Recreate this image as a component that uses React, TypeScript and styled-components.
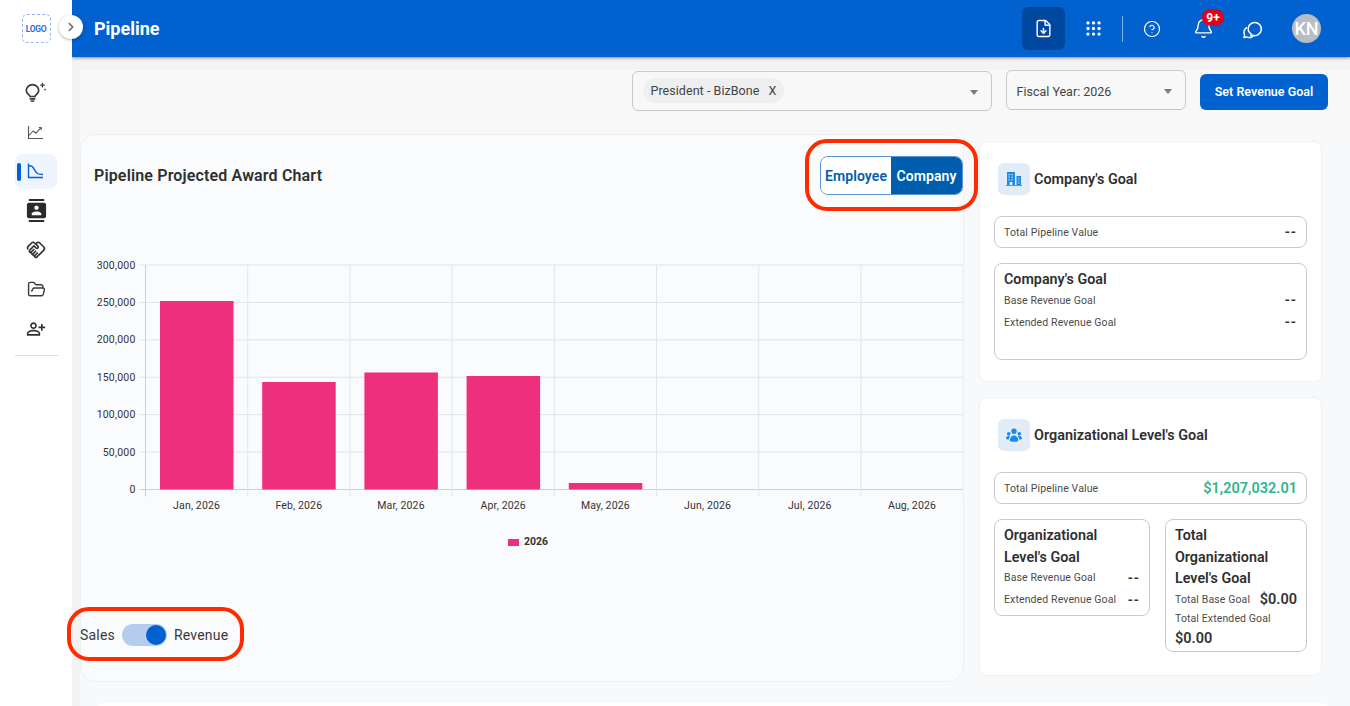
import React from "react";
import styled, { createGlobalStyle } from "styled-components";
import { FileDown, Grip, CircleHelp, Bell, FolderOpen, ChevronRight } from "lucide-react";
import { MdContacts, MdOutlineHandshake, MdOutlinePersonAddAlt } from "react-icons/md";

const Global = createGlobalStyle`
  html, body { margin: 0; padding: 0; height: 100%; overflow: hidden; }
  body { font-family: Roboto, "Liberation Sans", sans-serif; color: #2f2f2f; background: #f7f7f8; }
  * { box-sizing: border-box; }
`;

const Page = styled.div`
  display: flex;
  width: 1350px;
  height: 706px;
  overflow: hidden;
  position: relative;
`;

const Sidebar = styled.aside`
  width: 72px;
  flex: none;
  background: #fff;
  display: flex;
  flex-direction: column;
  align-items: center;
  position: relative;
  z-index: 3;
  padding-top: 14px;
`;

const Logo = styled.div`
  width: 29px;
  height: 29px;
  border: 1px dashed #8fb4ee;
  border-radius: 5px;
  display: flex;
  align-items: center;
  justify-content: center;
  font-size: 8.5px;
  font-weight: 700;
  letter-spacing: -0.3px;
  color: #2f6fd6;
  margin-bottom: 32px;
`;

const CollapseButton = styled.button`
  position: absolute;
  left: 59px;
  top: 15px;
  width: 24px;
  height: 24px;
  padding: 0;
  border: none;
  border-radius: 50%;
  background: #fff;
  color: #666;
  display: flex;
  align-items: center;
  justify-content: center;
  box-shadow: 0 1px 3px rgba(0, 0, 0, 0.3);
`;

const NavList = styled.nav`
  display: flex;
  flex-direction: column;
  align-items: center;
  width: 100%;
`;

const NavItem = styled.div<{ $active?: boolean }>`
  width: 42px;
  height: 35px;
  margin-bottom: 4.4px;
  border-radius: 8px;
  display: flex;
  align-items: center;
  justify-content: center;
  color: #3a3a3a;
  position: relative;
  background: ${(p) => (p.$active ? "#eef5fe" : "transparent")};
  ${(p) =>
    p.$active &&
    `&::before {
      content: "";
      position: absolute;
      left: 2px;
      top: 9px;
      width: 4px;
      height: 18px;
      border-radius: 2px;
      background: #0061cf;
    }`}
`;

const NavDivider = styled.div`
  width: 43px;
  height: 1px;
  background: #dcdcdc;
  margin-top: 4px;
`;

const Main = styled.div`
  flex: 1;
  min-width: 0;
  display: flex;
  flex-direction: column;
`;

const Header = styled.header`
  height: 57px;
  flex: none;
  background: #0061cf;
  box-shadow: 0 1px 3px rgba(0, 0, 0, 0.45);
  display: flex;
  align-items: center;
  padding-left: 22px;
  padding-right: 29px;
  color: #fff;
  position: relative;
  z-index: 2;
`;

const Title = styled.h1`
  margin: 0;
  font-size: 18px;
  font-weight: 700;
  flex: 1;
`;

const ActiveIconBox = styled.div`
  width: 43px;
  height: 43px;
  border-radius: 6px;
  background: #00479f;
  display: flex;
  align-items: center;
  justify-content: center;
  margin-right: 16px;
`;

const HeaderIcon = styled.div<{ $mr: number }>`
  width: 24px;
  height: 24px;
  display: flex;
  align-items: center;
  justify-content: center;
  margin-right: ${(p) => p.$mr}px;
  position: relative;
`;

const HeaderDivider = styled.div`
  width: 1px;
  height: 26px;
  background: rgba(255, 255, 255, 0.5);
  margin-right: 17px;
`;

const Badge = styled.span`
  position: absolute;
  left: 11px;
  top: -7.5px;
  min-width: 22px;
  height: 17px;
  border-radius: 9px;
  background: #e0021a;
  color: #fff;
  font-size: 12px;
  font-weight: 700;
  display: flex;
  align-items: center;
  justify-content: center;
`;

const Avatar = styled.div`
  width: 29px;
  height: 29px;
  border-radius: 50%;
  background: #b8bcc3;
  color: #fff;
  font-size: 18px;
  font-weight: 500;
  display: flex;
  align-items: center;
  justify-content: center;
`;

const Content = styled.div`
  flex: 1;
  min-height: 0;
  padding: 13px 0 0 8px;
  background: #f3f3f4;
`;

const Toolbar = styled.div`
  display: flex;
  align-items: flex-start;
  justify-content: flex-end;
  padding-right: 22px;
  height: 64px;
  background: #f8f8f8;
`;

const SelectBox = styled.div<{ $w: number; $mr: number; $top: number }>`
  width: ${(p) => p.$w}px;
  height: 40px;
  margin-top: ${(p) => p.$top}px;
  margin-right: ${(p) => p.$mr}px;
  border: 1px solid #c8c8c8;
  border-radius: 6px;
  display: flex;
  align-items: center;
  padding: 2px 13px 0 9.5px;
  font-size: 12.5px;
  color: #444;
`;

const Chip = styled.span`
  height: 25px;
  margin-top: -3px;
  border-radius: 13px;
  background: #eeeff1;
  display: inline-flex;
  align-items: center;
  padding: 0 8px;
  font-size: 12.5px;
  gap: 9px;
  letter-spacing: 0.05px;
  color: #444;
`;

const Caret = styled.span`
  margin-left: auto;
  width: 0;
  height: 0;
  border-left: 4.5px solid transparent;
  border-right: 4.5px solid transparent;
  border-top: 5px solid #7a7a7a;
`;

const PrimaryButton = styled.button`
  width: 128px;
  height: 36px;
  margin-top: 4px;
  padding: 0 0 2px;
  border: none;
  border-radius: 6px;
  background: #0061cf;
  color: #fff;
  font-family: inherit;
  font-size: 12.5px;
  font-weight: 600;
`;

const Body = styled.div`
  display: flex;
  align-items: flex-start;
  background: #f8f9fb;
  height: 572px;
  position: relative;
`;

const ChartCard = styled.section`
  width: 884px;
  height: 548px;
  flex: none;
  background: #fafbfd;
  border: 1px solid #eff0f2;
  border-radius: 16px;
  position: relative;
`;

const ChartHead = styled.div`
  display: flex;
  align-items: flex-start;
  justify-content: space-between;
  padding: 21px 0 0 13px;
  height: 125px;
`;

const ChartTitle = styled.h2`
  margin: 10px 0 0;
  font-size: 16px;
  font-weight: 600;
  letter-spacing: 0.15px;
`;

const Segmented = styled.div`
  display: flex;
  width: 143px;
  height: 39px;
  border: 1px solid #5b95d2;
  border-radius: 8px;
  overflow: hidden;
`;

const Segment = styled.div<{ $on?: boolean }>`
  flex: ${(p) => (p.$on ? "1" : "0 0 70px")};
  display: flex;
  align-items: center;
  justify-content: center;
  font-size: 14px;
  font-weight: 600;
  letter-spacing: 0.1px;
  background: ${(p) => (p.$on ? "#005eae" : "#fff")};
  color: ${(p) => (p.$on ? "#fff" : "#005eae")};
`;

const ChartSvg = styled.svg`
  display: block;
`;

const SwitchRow = styled.div`
  display: flex;
  align-items: center;
  padding: 64px 0 0 0;
  margin-left: -1px;
  font-size: 14px;
  color: #3a3a3a;
  letter-spacing: 0.2px;
`;

const SwitchTrack = styled.div`
  width: 45px;
  height: 22px;
  border-radius: 11px;
  background: #b4ccee;
  margin: 0 7px;
  position: relative;
`;

const SwitchThumb = styled.div`
  position: absolute;
  right: 1px;
  top: 1px;
  width: 20px;
  height: 20px;
  border-radius: 50%;
  background: #0061cf;
`;

const Side = styled.div`
  width: 343px;
  margin: 7px 0 0 15px;
  display: flex;
  flex-direction: column;
  gap: 15px;
`;

const GoalCard = styled.section<{ $h: number }>`
  height: ${(p) => p.$h}px;
  background: #fff;
  border: 1px solid #f0f1f3;
  border-radius: 8px;
  padding: 21px 14px 0;
`;

const GoalHead = styled.div`
  display: flex;
  align-items: center;
  gap: 4px;
  padding-left: 4px;
  font-size: 14.4px;
  font-weight: 600;
  margin-bottom: 21px;
`;

const IconTile = styled.div`
  width: 32px;
  height: 32px;
  border-radius: 6px;
  background: #e1ecf8;
  display: flex;
  align-items: center;
  justify-content: center;
  color: #1e88e5;
`;

const Framed = styled.div`
  border: 1px solid #c9c9c9;
  border-radius: 8px;
`;

const TotalRow = styled(Framed)`
  height: 32px;
  display: flex;
  align-items: center;
  justify-content: space-between;
  padding: 0 9px;
  margin-bottom: 15px;
`;

const SmallLabel = styled.span`
  font-size: 10.5px;
  color: #4b4b4b;
  letter-spacing: 0.12px;
`;

const Dash = styled.span`
  font-size: 14px;
  font-weight: 600;
  color: #333;
  letter-spacing: 1px;
`;

const Money = styled.span`
  font-size: 14.5px;
  font-weight: 600;
  color: #2db68d;
`;

const GoalBox = styled(Framed)<{ $h?: number; $w?: number }>`
  ${(p) => p.$h && `height: ${p.$h}px;`}
  ${(p) => p.$w && `width: ${p.$w}px;`}
  padding: 5px 9px 4px;
  min-width: 0;
`;

const BoxTitle = styled.div`
  font-size: 14.3px;
  font-weight: 600;
  line-height: 21.5px;
  margin-bottom: -1.5px;
`;

const GoalLine = styled.div`
  display: flex;
  align-items: center;
  justify-content: space-between;
  height: 22px;
`;

const BoxPair = styled.div`
  display: flex;
  align-items: flex-start;
  gap: 15px;
`;

const BigValue = styled.span`
  font-size: 14.5px;
  font-weight: 600;
  color: #333;
`;

const TotalExtended = styled.div`
  line-height: 16px;
  margin: -1px 0 1px;
`;

const BelowCard = styled.div`
  position: absolute;
  left: 16px;
  right: 21px;
  top: 569px;
  height: 20px;
  background: #fff;
  border-radius: 8px 8px 0 0;
`;

const Ring = styled.div<{ $x: number; $y: number; $w: number; $h: number }>`
  position: absolute;
  left: ${(p) => p.$x}px;
  top: ${(p) => p.$y}px;
  width: ${(p) => p.$w}px;
  height: ${(p) => p.$h}px;
  border: 4px solid #ff2a00;
  border-radius: 22px;
  z-index: 5;
  pointer-events: none;
`;

const LightbulbSpark = () => (
  <svg width="24" height="24" viewBox="0 0 24 24" fill="none" stroke="#3a3a3a" strokeWidth="1.7" strokeLinecap="round">
    <path d="M6 15.5c0-1.6-3.7-2.6-3.7-5.7a6.2 6.2 0 0 1 12.4 0c0 3.1-3.7 4.1-3.7 5.7z" />
    <path d="M6.3 17.8h4.4M7.3 20h2.4" />
    <path d="M18.5 2.5v3.4M16.8 4.2h3.4" strokeWidth="1.3" />
    <circle cx="21" cy="8.6" r=".9" fill="#3a3a3a" stroke="none" />
  </svg>
);

const TrendAxes = () => (
  <svg width="18" height="18" viewBox="0 0 18 18" fill="none" stroke="#555" strokeWidth="1.1" strokeLinejoin="round">
    <path d="M1.5 3v12.5h14.5" />
    <path d="M2 12.5l4-4.5 3 2.2 5-5.5M11.8 4.5h2.4v2.4" />
  </svg>
);

const DecayAxes = () => (
  <svg width="18" height="18" viewBox="0 0 18 18" fill="none" stroke="#0061cf" strokeWidth="1.4">
    <path d="M1.5 1.5v14h14.5" />
    <path d="M1.5 4h2.5c2.5 0 3.8 6 6.5 7.5 1.6.9 3.4 1 5.5 1" />
  </svg>
);

const ChatBubbles = () => (
  <svg width="22" height="22" viewBox="0 0 22 22" fill="none" stroke="#fff" strokeWidth="1.5" strokeLinejoin="round">
    <path d="M6.3 12.5a6.6 6.6 0 1 1 4.4 4.8l-1.9.3.3-1.8a6.5 6.5 0 0 1-2.8-3.3z" />
    <path d="M5 9.5a5.2 5.2 0 0 0-2.4 7.2l-.6 2.8 2.9-.6a5.2 5.2 0 0 0 6.6-1.7" />
  </svg>
);

const BuildingIcon = () => (
  <svg width="16" height="16" viewBox="0 0 16 16" fill="#1e88e5">
    <path
      fillRule="evenodd"
      d="M1 1h8v13H1zM2.5 3v1.2h1.2V3zM5.5 3v1.2h1.2V3zM2.5 5.6v1.2h1.2V5.6zM5.5 5.6v1.2h1.2V5.6zM2.5 8.2v1.2h1.2V8.2zM5.5 8.2v1.2h1.2V8.2zM3.6 11v3h2.8v-3z"
    />
    <path fillRule="evenodd" d="M10.5 5H15v9h-4.5zM12.3 6.8V8h1V6.800zM12.300 9.200v1.200h1V9.200zM12.300 11.600v1.200h1v-1.200z" />
    <path d="M0 14.200h16V15H0z" />
  </svg>
);

const PeopleIcon = () => (
  <svg width="16" height="15" viewBox="0 0 16 15" fill="#1e88e5">
    <circle cx="8" cy="3.300" r="2.700" />
    <circle cx="2.700" cy="5.700" r="1.800" />
    <circle cx="13.300" cy="5.700" r="1.800" />
    <path d="M3.800 12.500c0-3 1.900-5 4.200-5s4.200 2 4.200 5c0 .8-1.900 1.300-4.200 1.300s-4.200-.5-4.200-1.300z" />
    <path d="M0 10.800c0-1.700 1-2.900 2.600-3.100.6 0 1.100.1 1.500.4-.7.9-1.200 2-1.300 3.500-1.500-.1-2.800-.3-2.800-.8zM16 10.800c0-1.700-1-2.900-2.600-3.100-.6 0-1.100.1-1.500.4.700.9 1.200 2 1.300 3.500 1.500-.1 2.800-.3 2.800-.8z" />
  </svg>
);

const yTicks = ["300,000", "250,000", "200,000", "150,000", "100,000", "50,000", "0"];
const months = ["Jan", "Feb", "Mar", "Apr", "May", "Jun", "Jul", "Aug"];
const barTops = [301, 382, 372.5, 376, 483];
const pad = { x: 81, y: 260 };

const ProjectedChart = () => {
  const x0 = 145.5 - pad.x;
  const step = 102.2;
  const base = 489.5 - pad.y;
  const top = 265 - pad.y;
  const rowH = (base - top) / 6;
  return (
    <ChartSvg width="882" height="300" viewBox="0 0 882 300">
      {yTicks.map((t, i) => {
        const y = top + i * rowH;
        return (
          <g key={t}>
            <line x1={x0 - 6} x2={x0 + step * 8} y1={y} y2={y} stroke={i === 6 ? "#cfd0d4" : "#e2e3e6"} />
            <text x={x0 - 10} y={y + 3.5} textAnchor="end" fontSize="10.5" fill="#333" letterSpacing="0.2">{t}</text>
          </g>
        );
      })}
      {months.map((m, i) => {
        const x = x0 + i * step;
        return (
          <g key={m}>
            <line x1={x} x2={x} y1={top} y2={base + 7} stroke={i === 0 ? "#cfd0d4" : "#e4e5e8"} />
            <text x={x + step / 2} y={base + 19.5} textAnchor="middle" fontSize="10.5" fill="#333" letterSpacing="0.15">{m}, 2026</text>
          </g>
        );
      })}
      <line x1={x0 + step * 8} x2={x0 + step * 8} y1={top} y2={base + 7} stroke="#e4e5e8" />
      {barTops.map((t, i) => (
        <rect key={i} x={x0 + 14.5 + i * step} y={t - pad.y} width="73.5" height={489.5 - t} fill="#ee2f7d" />
      ))}
      <rect x="427" y="279" width="11" height="7" fill="#ee2f7d" />
      <text x="443" y="285" fontSize="10.5" fontWeight="700" fill="#333">2026</text>
    </ChartSvg>
  );
};

export default function App() {
  return (
    <Page>
      <Global />
      <Sidebar>
        <Logo>LOGO</Logo>
        <CollapseButton aria-label="Expand"><ChevronRight size={14} strokeWidth={2.6} /></CollapseButton>
        <NavList>
          <NavItem><LightbulbSpark /></NavItem>
          <NavItem><TrendAxes /></NavItem>
          <NavItem $active><DecayAxes /></NavItem>
          <NavItem><MdContacts size={23} color="#2b2b2b" /></NavItem>
          <NavItem><MdOutlineHandshake size={20} color="#333" /></NavItem>
          <NavItem><FolderOpen size={19} strokeWidth={1.8} /></NavItem>
          <NavItem><MdOutlinePersonAddAlt size={20} color="#333" /></NavItem>
          <NavDivider />
        </NavList>
      </Sidebar>
      <Main>
        <Header>
          <Title>Pipeline</Title>
          <ActiveIconBox><FileDown size={19} strokeWidth={1.8} /></ActiveIconBox>
          <HeaderIcon $mr={17}><Grip size={19} strokeWidth={2.2} /></HeaderIcon>
          <HeaderDivider />
          <HeaderIcon $mr={27}><CircleHelp size={18} strokeWidth={1.6} /></HeaderIcon>
          <HeaderIcon $mr={26}><Bell size={21} strokeWidth={1.6} /><Badge>9+</Badge></HeaderIcon>
          <HeaderIcon $mr={27}><ChatBubbles /></HeaderIcon>
          <Avatar>KN</Avatar>
        </Header>
        <Content>
          <Toolbar>
            <SelectBox $w={360} $mr={14} $top={1}>
              <Chip>President - BizBone <span>X</span></Chip>
              <Caret />
            </SelectBox>
            <SelectBox $w={180} $mr={14} $top={0}>Fiscal Year: 2026<Caret /></SelectBox>
            <PrimaryButton>Set Revenue Goal</PrimaryButton>
          </Toolbar>
          <Body>
            <ChartCard>
              <ChartHead>
                <ChartTitle>Pipeline Projected Award Chart</ChartTitle>
                <Segmented>
                  <Segment>Employee</Segment>
                  <Segment $on>Company</Segment>
                </Segmented>
              </ChartHead>
              <ProjectedChart />
              <SwitchRow>
                Sales
                <SwitchTrack><SwitchThumb /></SwitchTrack>
                Revenue
              </SwitchRow>
            </ChartCard>
            <Side>
              <GoalCard $h={241}>
                <GoalHead>
                  <IconTile><BuildingIcon /></IconTile>
                  Company's Goal
                </GoalHead>
                <TotalRow>
                  <SmallLabel>Total Pipeline Value</SmallLabel>
                  <Dash>--</Dash>
                </TotalRow>
                <GoalBox $h={97}>
                  <BoxTitle>Company's Goal</BoxTitle>
                  <GoalLine><SmallLabel>Base Revenue Goal</SmallLabel><Dash>--</Dash></GoalLine>
                  <GoalLine><SmallLabel>Extended Revenue Goal</SmallLabel><Dash>--</Dash></GoalLine>
                </GoalBox>
              </GoalCard>
              <GoalCard $h={279}>
                <GoalHead>
                  <IconTile><PeopleIcon /></IconTile>
                  Organizational Level's Goal
                </GoalHead>
                <TotalRow>
                  <SmallLabel>Total Pipeline Value</SmallLabel>
                  <Money>$1,207,032.01</Money>
                </TotalRow>
                <BoxPair>
                  <GoalBox $w={156}>
                    <BoxTitle>Organizational Level's Goal</BoxTitle>
                    <GoalLine><SmallLabel>Base Revenue Goal</SmallLabel><Dash>--</Dash></GoalLine>
                    <GoalLine><SmallLabel>Extended Revenue Goal</SmallLabel><Dash>--</Dash></GoalLine>
                  </GoalBox>
                  <GoalBox $w={142}>
                    <BoxTitle>Total Organizational Level's Goal</BoxTitle>
                    <GoalLine><SmallLabel>Total Base Goal</SmallLabel><BigValue>$0.00</BigValue></GoalLine>
                    <TotalExtended><SmallLabel>Total Extended Goal</SmallLabel></TotalExtended>
                    <BigValue>$0.00</BigValue>
                  </GoalBox>
                </BoxPair>
              </GoalCard>
            </Side>
            <BelowCard />
          </Body>
        </Content>
      </Main>
      <Ring $x={805} $y={139} $w={173} $h={72} />
      <Ring $x={67} $y={607} $w={177} $h={54} />
    </Page>
  );
}
